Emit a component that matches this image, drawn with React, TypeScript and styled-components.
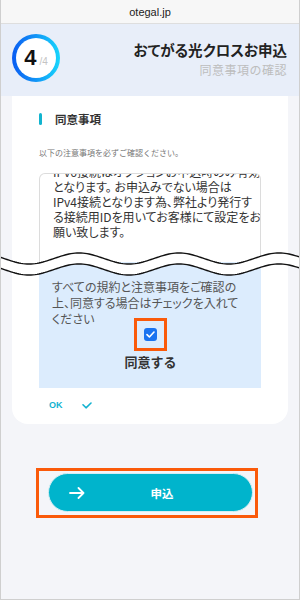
import React from 'react';
import styled, { createGlobalStyle } from 'styled-components';

const GlobalStyle = createGlobalStyle`
  html, body {
    margin: 0;
    padding: 0;
  }
  body {
    font-family: "Noto Sans CJK JP", "Noto Sans", sans-serif;
    background: #ffffff;
  }
  * {
    box-sizing: border-box;
  }
`;

const Screen = styled.div`
  width: 300px;
  height: 600px;
  border: 1px solid #cfcfcf;
  border-top: none;
  background: #f4f5f9;
  overflow: hidden;
  display: flex;
  flex-direction: column;
`;

const AddressBar = styled.div`
  height: 24px;
  flex: none;
  background: #f7f7f7;
  border-bottom: 1px solid #dedede;
  display: flex;
  align-items: center;
  justify-content: center;
  font-family: "Liberation Sans", Arial, sans-serif;
  font-size: 11px;
  color: #222;
`;

const Header = styled.header`
  flex: none;
  height: 72px;
  background: #e8eef9;
  padding: 10px 12px 14px 11px;
  display: flex;
  justify-content: space-between;
`;

const StepRing = styled.div`
  width: 48px;
  height: 48px;
  border-radius: 50%;
  padding: 4px;
  background: linear-gradient(90deg, #0a5cf2 0%, #118ff6 45%, #17d6fc 100%);
`;

const StepInner = styled.div`
  width: 100%;
  height: 100%;
  border-radius: 50%;
  background: #fff;
  display: flex;
  align-items: baseline;
  justify-content: center;
  padding-top: 7px;
  gap: 3px;
  font-family: "Liberation Sans", Arial, sans-serif;
`;

const StepNow = styled.span`
  font-size: 22px;
  font-weight: 700;
  color: #111;
`;

const StepAll = styled.span`
  font-size: 10px;
  color: #c4c4c4;
`;

const TitleBlock = styled.div`
  margin-top: 6px;
  text-align: right;
`;

const Title = styled.div`
  font-size: 14.5px;
  font-weight: 700;
  line-height: 20px;
  color: #222;
  font-feature-settings: "palt";
`;

const SubTitle = styled.div`
  font-size: 12px;
  line-height: 20px;
  letter-spacing: 0.5px;
  color: #bdbdbd;
`;

const Card = styled.section`
  margin: 0 11px;
  background: #fff;
  border-radius: 0 0 16px 16px;
  padding: 17px 27px 13px;
`;

const SectionTitle = styled.h2`
  margin: 0;
  display: flex;
  align-items: center;
  gap: 13px;
  font-size: 11.5px;
  font-weight: 700;
  line-height: 12px;
  color: #333;
`;

const Bar = styled.span`
  width: 3px;
  height: 12px;
  border-radius: 2px;
  background: #12b4cf;
`;

const Note = styled.p`
  margin: 22px 0 0;
  font-size: 8px;
  line-height: 12px;
  color: #777;
`;

const TermsBox = styled.div`
  margin-top: 14px;
  height: 89px;
  border: 1px solid #dcdcdc;
  border-bottom: none;
  border-radius: 6px 6px 0 0;
  overflow: hidden;
  padding: 0 10px 0 13px;
`;

const TermsText = styled.div`
  margin-top: -10px;
  font-size: 12px;
  line-height: 15px;
  color: #333;
  white-space: nowrap;
  font-feature-settings: "palt";
`;

const Break = styled.div`
  position: relative;
  height: 0;
  z-index: 2;
`;

const WaveSvg = styled.svg`
  position: absolute;
  left: -40px;
  top: -11px;
  display: block;
`;

const AgreeBox = styled.div`
  background: #dcecfd;
  padding: 17px 12px 17px 13px;
`;

const AgreeText = styled.p`
  margin: 0;
  font-size: 12px;
  line-height: 16px;
  color: #555;
  white-space: nowrap;
  font-feature-settings: "palt";
`;

const CheckRow = styled.div`
  margin-top: 1px;
  display: flex;
  justify-content: center;
`;

const CheckWrap = styled.span`
  position: relative;
  display: block;
  width: 13px;
  height: 13px;

  &::after {
    content: "";
    position: absolute;
    inset: -10px;
    border: 3px solid #fa5a0a;
  }
`;

const CheckBox = styled.span`
  display: flex;
  align-items: center;
  justify-content: center;
  width: 13px;
  height: 13px;
  border-radius: 3px;
  background: #1a73f0;
`;

const AgreeLabel = styled.div`
  margin-top: 12px;
  text-align: center;
  font-size: 13px;
  font-weight: 700;
  line-height: 18px;
  color: #333;
`;

const OkRow = styled.div`
  margin-top: 11px;
  padding-left: 10px;
  display: flex;
  align-items: center;
  gap: 19px;
  height: 12px;
  font-family: "Liberation Sans", Arial, sans-serif;
  font-size: 9px;
  font-weight: 700;
  color: #13b2d0;
`;

const ButtonArea = styled.div`
  margin-top: 44px;
  padding-left: 35px;
  display: flex;
`;

const Highlight = styled.div`
  border: 3px solid #fa5a0a;
  padding: 2px 2px 3px 9px;
`;

const SubmitButton = styled.button`
  width: 205px;
  height: 39px;
  border-radius: 20px;
  border: 1px solid #d4eef3;
  background: #00b4cc;
  display: flex;
  align-items: center;
  padding: 0 13px 0 20px;
  color: #fff;
  font-family: inherit;
  cursor: pointer;
`;

const ButtonLabel = styled.span`
  flex: 1;
  text-align: center;
  font-size: 11.5px;
  font-weight: 700;
`;

const wavePath = (base: number) => {
  const pts: string[] = [];
  for (let x = 0; x <= 300; x += 2) {
    const y = base + 5.5 * Math.cos((2 * Math.PI * (x - 30)) / 100);
    pts.push(`${x},${y.toFixed(2)}`);
  }
  return pts;
};

const Wave: React.FC = () => {
  const top = wavePath(7.5);
  const bottom = wavePath(18.5);
  const fill = `M${top.join(' L')} L${[...bottom].reverse().join(' L')} Z`;
  return (
    <WaveSvg width="300" height="28" viewBox="0 0 300 28">
      <path d={fill} fill="#fff" />
      <path d={`M${top.join(' L')}`} fill="none" stroke="#111" strokeWidth="1.4" />
      <path d={`M${bottom.join(' L')}`} fill="none" stroke="#111" strokeWidth="1.4" />
    </WaveSvg>
  );
};

const App: React.FC = () => {
  return (
    <>
      <GlobalStyle />
      <Screen>
        <AddressBar>otegal.jp</AddressBar>

        <Header>
          <StepRing>
            <StepInner>
              <StepNow>4</StepNow>
              <StepAll>/4</StepAll>
            </StepInner>
          </StepRing>
          <TitleBlock>
            <Title>おてがる光クロスお申込</Title>
            <SubTitle>同意事項の確認</SubTitle>
          </TitleBlock>
        </Header>

        <Card>
          <SectionTitle>
            <Bar />
            同意事項
          </SectionTitle>
          <Note>以下の注意事項を必ずご確認ください。</Note>

          <TermsBox>
            <TermsText>
              IPv6接続はオプションお申込時のみ有効
              <br />
              となります。 お申込みでない場合は
              <br />
              IPv4接続となります為、弊社より発行す
              <br />
              る接続用IDを用いてお客様にて設定をお
              <br />
              願い致します。
            </TermsText>
          </TermsBox>

          <Break>
            <Wave />
          </Break>

          <AgreeBox>
            <AgreeText>
              すべての規約と注意事項をご確認の
              <br />
              上、同意する場合はチェックを入れて
              <br />
              ください
            </AgreeText>
            <CheckRow>
              <CheckWrap>
                <CheckBox>
                  <svg width="9" height="7" viewBox="0 0 9 7">
                    <path d="M1 3.6 L3.4 6 L8 1" fill="none" stroke="#fff" strokeWidth="1.6" strokeLinecap="round" strokeLinejoin="round" />
                  </svg>
                </CheckBox>
              </CheckWrap>
            </CheckRow>
            <AgreeLabel>同意する</AgreeLabel>
          </AgreeBox>

          <OkRow>
            <span>OK</span>
            <svg width="10" height="7" viewBox="0 0 10 7">
              <path d="M1 2.8 L4 5.8 L9 1" fill="none" stroke="#13b2d0" strokeWidth="1.6" strokeLinecap="round" strokeLinejoin="round" />
            </svg>
          </OkRow>
        </Card>

        <ButtonArea>
          <Highlight>
            <SubmitButton type="button">
              <svg width="16" height="12" viewBox="0 0 16 12">
                <path d="M1 6 H14.5 M9.5 1 L14.5 6 L9.5 11" fill="none" stroke="#fff" strokeWidth="1.8" strokeLinecap="round" strokeLinejoin="round" />
              </svg>
              <ButtonLabel>申込</ButtonLabel>
            </SubmitButton>
          </Highlight>
        </ButtonArea>
      </Screen>
    </>
  );
};

export default App;
